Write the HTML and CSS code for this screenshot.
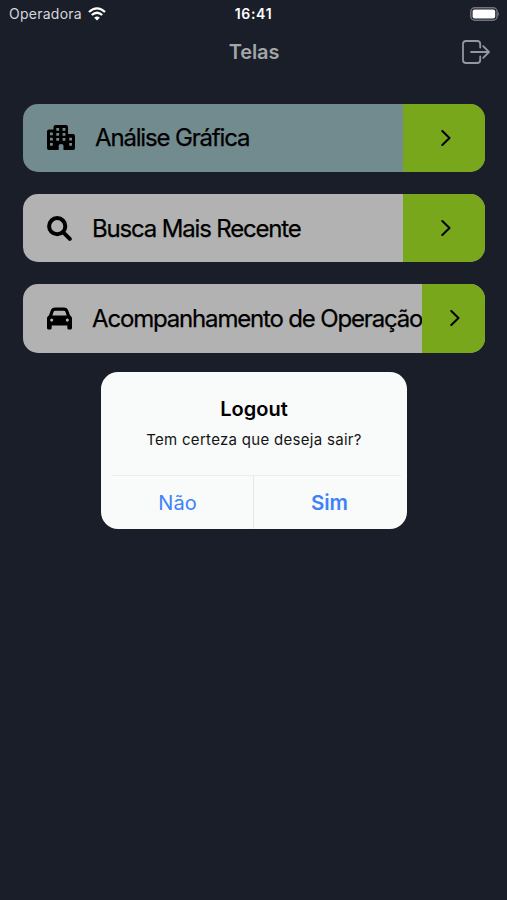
FILE: index.html
```html
<!DOCTYPE html>
<html lang="pt-BR">
<head>
    <meta charset="UTF-8">
    <meta name="viewport" content="width=device-width, initial-scale=1.0">
    <title>Telas</title>
    <link rel="stylesheet" href="styles.css">
</head>
<body>

    <!-- Barra de status -->
    <div class="status-bar">
        <div class="carrier">
            <span>Operadora</span>
            <svg class="wifi" viewBox="0 0 18 14">
                <path d="M1 5 Q9 -2.2 17 5" />
                <path d="M3.8 8 Q9 3.4 14.2 8" />
                <path class="dot" d="M9 13.6 L6.2 10.7 Q9 8.5 11.8 10.7 Z" />
            </svg>
        </div>
        <span class="clock">16:41</span>
        <svg class="battery" viewBox="0 0 30 14">
            <rect class="shell" x="0.8" y="0.8" width="26.3" height="12.4" rx="4" />
            <rect class="charge" x="2.6" y="2.4" width="22.6" height="9.2" rx="2" />
            <path class="tip" d="M28 5 Q30 7 28 9 Z" />
        </svg>
    </div>

    <!-- Cabeçalho -->
    <header class="header">
        <h1>Telas</h1>
        <svg class="exit" viewBox="0 0 28 24">
            <path d="M18.2 7.5 V4 Q18.2 1 15.2 1 H4 Q1 1 1 4 V20 Q1 23 4 23 H15.2 Q18.2 23 18.2 20 V16.5" />
            <path d="M9 12 H27 M21.2 6.2 L27 12 L21.2 17.8" />
        </svg>
    </header>

    <!-- Lista de telas -->
    <main class="menu">
        <div class="card card-active">
            <div class="card-body">
                <svg class="icon icon-city" viewBox="0 0 28 25">
                    <path fill-rule="evenodd" d="M2 4.5 H6.5 V2 Q6.5 0 8.5 0 H19 Q21 0 21 2 V9 H26 Q28 9 28 11 V23 Q28 25 26 25 H16.5 V20.5 Q16.5 19 14 19 Q11.7 19 11.7 20.5 V25 H2 Q0 25 0 23 V6.5 Q0 4.5 2 4.5 Z
                    M3 7.5 h2.8 v2.8 h-2.8 Z M3 12.7 h2.8 v2.8 h-2.8 Z M3 17.9 h2.8 v2.8 h-2.8 Z
                    M9.3 3 h2.8 v2.8 h-2.8 Z M15.6 3 h2.8 v2.8 h-2.8 Z M9.3 7.9 h2.8 v2.8 h-2.8 Z M15.6 7.9 h2.8 v2.8 h-2.8 Z M9.3 12.9 h2.8 v2.8 h-2.8 Z M15.6 12.9 h2.8 v2.8 h-2.8 Z
                    M22.2 12.7 h2.8 v2.8 h-2.8 Z M22.2 17.9 h2.8 v2.8 h-2.8 Z" />
                </svg>
                <span class="label">Análise Gráfica</span>
            </div>
            <div class="card-arrow"><svg viewBox="0 0 10 16"><path d="M1.3 1 L8.5 8 L1.3 15" /></svg></div>
        </div>

        <div class="card">
            <div class="card-body">
                <svg class="icon icon-search" viewBox="0 0 25 25">
                    <circle cx="10.2" cy="10.2" r="8.1" />
                    <path d="M16.3 16.3 L22.8 22.8" />
                </svg>
                <span class="label">Busca Mais Recente</span>
            </div>
            <div class="card-arrow"><svg viewBox="0 0 10 16"><path d="M1.3 1 L8.5 8 L1.3 15" /></svg></div>
        </div>

        <div class="card card-wide">
            <div class="card-body">
                <svg class="icon" viewBox="0 0 512 512">
                    <path d="M135.2 117.4L109.1 192H402.9l-26.1-74.6C372.3 104.6 360.2 96 346.6 96H165.4c-13.6 0-25.7 8.6-30.2 21.4zM39.6 196.8L74.8 96.3C88.3 57.8 124.6 32 165.4 32H346.6c40.8 0 77.1 25.8 90.6 64.3l35.2 100.5c23.2 9.6 39.6 32.5 39.6 59.2V448c0 17.7-14.3 32-32 32H448c-17.7 0-32-14.3-32-32V400H96v48c0 17.7-14.3 32-32 32H32c-17.7 0-32-14.3-32-32V256c0-26.7 16.4-49.6 39.6-59.2zM128 288a32 32 0 1 0-64 0 32 32 0 1 0 64 0zm288 32a32 32 0 1 0 0-64 32 32 0 1 0 0 64z" />
                </svg>
                <span class="label">Acompanhamento de Operação</span>
            </div>
            <div class="card-arrow"><svg viewBox="0 0 10 16"><path d="M1.3 1 L8.5 8 L1.3 15" /></svg></div>
        </div>
    </main>

    <!-- Alerta de logout -->
    <div class="alert">
        <div class="alert-text">
            <h2>Logout</h2>
            <p>Tem certeza que deseja sair?</p>
        </div>
        <div class="alert-buttons">
            <button class="btn">Não</button>
            <button class="btn btn-confirm">Sim</button>
        </div>
    </div>

</body>
</html>
```

FILE: styles.css
```css
/* Reset básico */
* {
    margin: 0;
    padding: 0;
    box-sizing: border-box;
}

body {
    font-family: Inter, 'Liberation Sans', sans-serif;
    background: #191e29;
    color: #000;
    height: 900px;
    overflow: hidden;
    position: relative;
}

svg {
    display: block;
    flex: none;
}

/* Barra de status */
.status-bar {
    display: grid;
    grid-template-columns: 1fr auto 1fr;
    align-items: center;
    height: 27px;
    padding: 0 7px 0 9px;
    color: #fff;
    font-size: 14px;
}

.carrier {
    display: flex;
    align-items: center;
    gap: 6px;
    color: #d5d7dc;
    letter-spacing: 0.25px;
}

.wifi {
    width: 18px;
    height: 14px;
    fill: none;
    stroke: #fff;
    stroke-width: 2.3;
}

.wifi .dot {
    fill: #fff;
    stroke: none;
}

.clock {
    margin-right: 2px;
    font-weight: 600;
    letter-spacing: 0.7px;
}

.battery {
    width: 30px;
    height: 14px;
    justify-self: end;
}

.shell {
    fill: none;
    stroke: #70747c;
    stroke-width: 1.5;
}

.charge {
    fill: #fff;
}

.tip {
    fill: #70747c;
}

/* Cabeçalho */
.header {
    display: grid;
    grid-template-columns: 1fr auto 1fr;
    align-items: center;
    height: 50px;
    padding: 0 17px 0 18px;
}

.header h1 {
    grid-column: 2;
    font-size: 20px;
    font-weight: 600;
    letter-spacing: -0.1px;
    color: #a3a5a9;
}

.exit {
    width: 28px;
    height: 24px;
    justify-self: end;
    fill: none;
    stroke: #94979d;
    stroke-width: 1.8;
    stroke-linecap: round;
    stroke-linejoin: round;
}

/* Lista de telas */
.menu {
    display: flex;
    flex-direction: column;
    gap: 22px;
    padding: 26.5px 22px 0 23px;
}

.card {
    display: flex;
    height: 68.4px;
    border-radius: 15px;
    overflow: hidden;
    background: #b2b2b2;
}

.card-active {
    background: #728b8e;
}

.card-body {
    flex: 1;
    display: flex;
    align-items: center;
    padding-left: 24px;
    gap: 20px;
}

.icon {
    width: 25px;
    height: 25px;
}

.icon-city {
    width: 28px;
}

.icon-search {
    fill: none;
    stroke: #000;
    stroke-width: 4;
    stroke-linecap: round;
}

.label {
    font-size: 24px;
    font-weight: 400;
    white-space: nowrap;
    letter-spacing: -1.17px;
    -webkit-text-stroke: 0.25px #000;
}

.card-arrow {
    display: flex;
    align-items: center;
    justify-content: center;
    width: 82px;
    padding-left: 3px;
    background: #79a71b;
}

.card-wide .card-arrow {
    width: 63px;
}

.card-arrow svg {
    width: 10px;
    height: 16px;
    fill: none;
    stroke: #000;
    stroke-width: 2;
    stroke-linecap: round;
    stroke-linejoin: round;
}

/* Alerta */
.alert {
    position: absolute;
    top: 372px;
    left: 101px;
    width: 306px;
    height: 157px;
    display: flex;
    flex-direction: column;
    border-radius: 17px;
    background: #f9fafa;
    overflow: hidden;
}

.alert-text {
    flex: 1;
    padding-top: 24px;
    text-align: center;
}

.alert-text h2 {
    font-size: 20px;
    font-weight: 600;
    line-height: 26px;
}

.alert-text p {
    margin-top: 8px;
    font-size: 15px;
    line-height: 20px;
    letter-spacing: 0.3px;
    color: #141414;
}

.alert-buttons {
    display: flex;
    height: 54px;
    margin: 0 6px 0 11px;
    border-top: 1px solid #ededef;
}

.btn {
    flex: none;
    width: 141px;
    padding-right: 10px;
    border: none;
    background: none;
    font-family: inherit;
    font-size: 20px;
    color: #3d83f7;
}

.btn-confirm {
    width: 148px;
    padding: 0 0 0 4px;
    border-left: 1px solid #e8e8ea;
    font-size: 20.5px;
    font-weight: 600;
}
```
